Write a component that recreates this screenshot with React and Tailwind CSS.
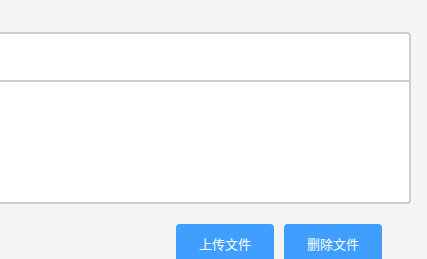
export default function App() {
  return (
    <div
      className="h-[259px] w-[427px] overflow-hidden bg-[#f5f5f5] pt-[32px]"
      style={{ fontFamily: '"Noto Sans CJK SC", "Noto Sans", sans-serif' }}
    >
      <div className="-ml-[20px] w-[431px] rounded-[4px] border-2 border-[#cdcdcd] bg-white">
        <div className="h-[48px] border-b-2 border-[#cdcdcd]"></div>
        <div className="h-[120px]"></div>
      </div>
      <div className="mt-[20px] flex justify-end gap-[10px] pr-[45px]">
        <button className="h-[40px] w-[98px] rounded-[4px] bg-[#409eff] text-[13px] text-white">
          上传文件
        </button>
        <button className="h-[40px] w-[98px] rounded-[4px] bg-[#409eff] text-[13px] text-white">
          删除文件
        </button>
      </div>
    </div>
  );
}
